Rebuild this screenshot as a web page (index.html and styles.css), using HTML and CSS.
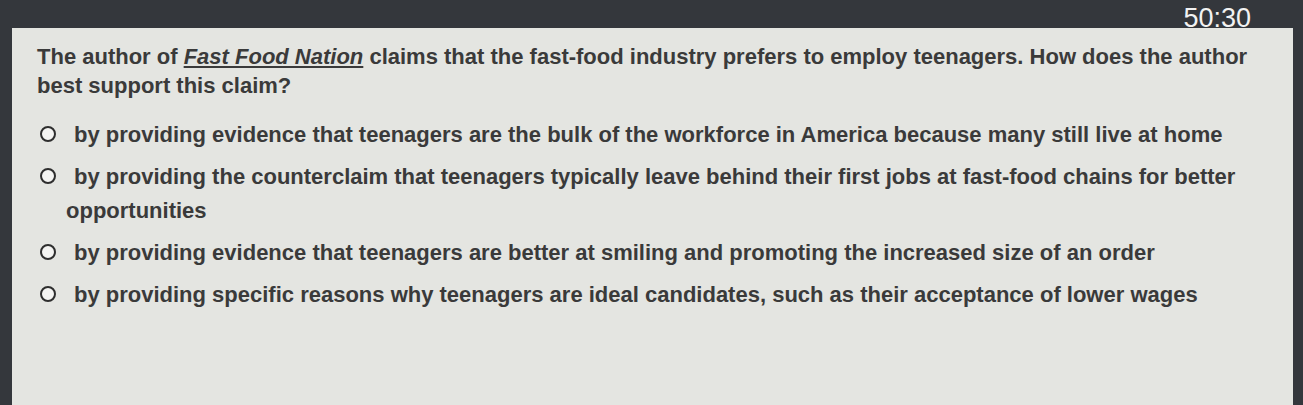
FILE: index.html
```html
<!DOCTYPE html>
<html>
<head>
<meta charset="utf-8">
<link rel="stylesheet" href="styles.css">
</head>
<body>
<div class="screen">
  <div class="topbar"><span class="timer">50:30</span></div>
  <div class="panel">
    <p class="question">The author of <span class="title">Fast Food Nation</span> claims that the fast-food industry prefers to employ teenagers. How does the author best support this claim?</p>
    <ul class="options">
      <li class="option"><span class="radio"></span><span class="label">by providing evidence that teenagers are the bulk of the workforce in America because many still live at home</span></li>
      <li class="option"><span class="radio"></span><span class="label">by providing the counterclaim that teenagers typically leave behind their first jobs at fast-food chains for better opportunities</span></li>
      <li class="option"><span class="radio"></span><span class="label">by providing evidence that teenagers are better at smiling and promoting the increased size of an order</span></li>
      <li class="option"><span class="radio"></span><span class="label">by providing specific reasons why teenagers are ideal candidates, such as their acceptance of lower wages</span></li>
    </ul>
  </div>
</div>
</body>
</html>
```
FILE: styles.css
```css
html, body {
  margin: 0;
  padding: 0;
  background: #34373c;
  width: 1303px;
  height: 405px;
  overflow: hidden;
}
.screen {
  display: flex;
  flex-direction: column;
  height: 405px;
  font-family: "Liberation Sans", Arial, sans-serif;
}
.topbar {
  height: 28px;
  display: flex;
  justify-content: flex-end;
  align-items: flex-start;
  padding-right: 52px;
}
.timer {
  color: #f2f2f2;
  font-size: 27px;
  line-height: 30px;
  margin-top: 3px;
}
.panel {
  flex: 1;
  margin-left: 12px;
  margin-right: 10px;
  background: #e4e5e1;
  padding: 14px 20px 0 25px;
  color: #3a3a3a;
}
.question {
  margin: 0;
  font-size: 22px;
  font-weight: bold;
  line-height: 29px;
  width: 1245px;
}
.title {
  font-style: italic;
  text-decoration: underline;
}
.options {
  list-style: none;
  margin: 18px 0 0 0;
  padding: 0;
  display: flex;
  flex-direction: column;
  gap: 8px;
}
.option {
  display: flex;
  align-items: flex-start;
  font-size: 22px;
  font-weight: bold;
  line-height: 34px;
}
.radio {
  flex: none;
  width: 12px;
  height: 12px;
  border: 2.5px solid #2e2e2e;
  border-radius: 50%;
  margin: 8px 10px 0 3px;
  background: #f4f4f2;
}
.label {
  width: 1198px;
  text-indent: 8px;
}
```
